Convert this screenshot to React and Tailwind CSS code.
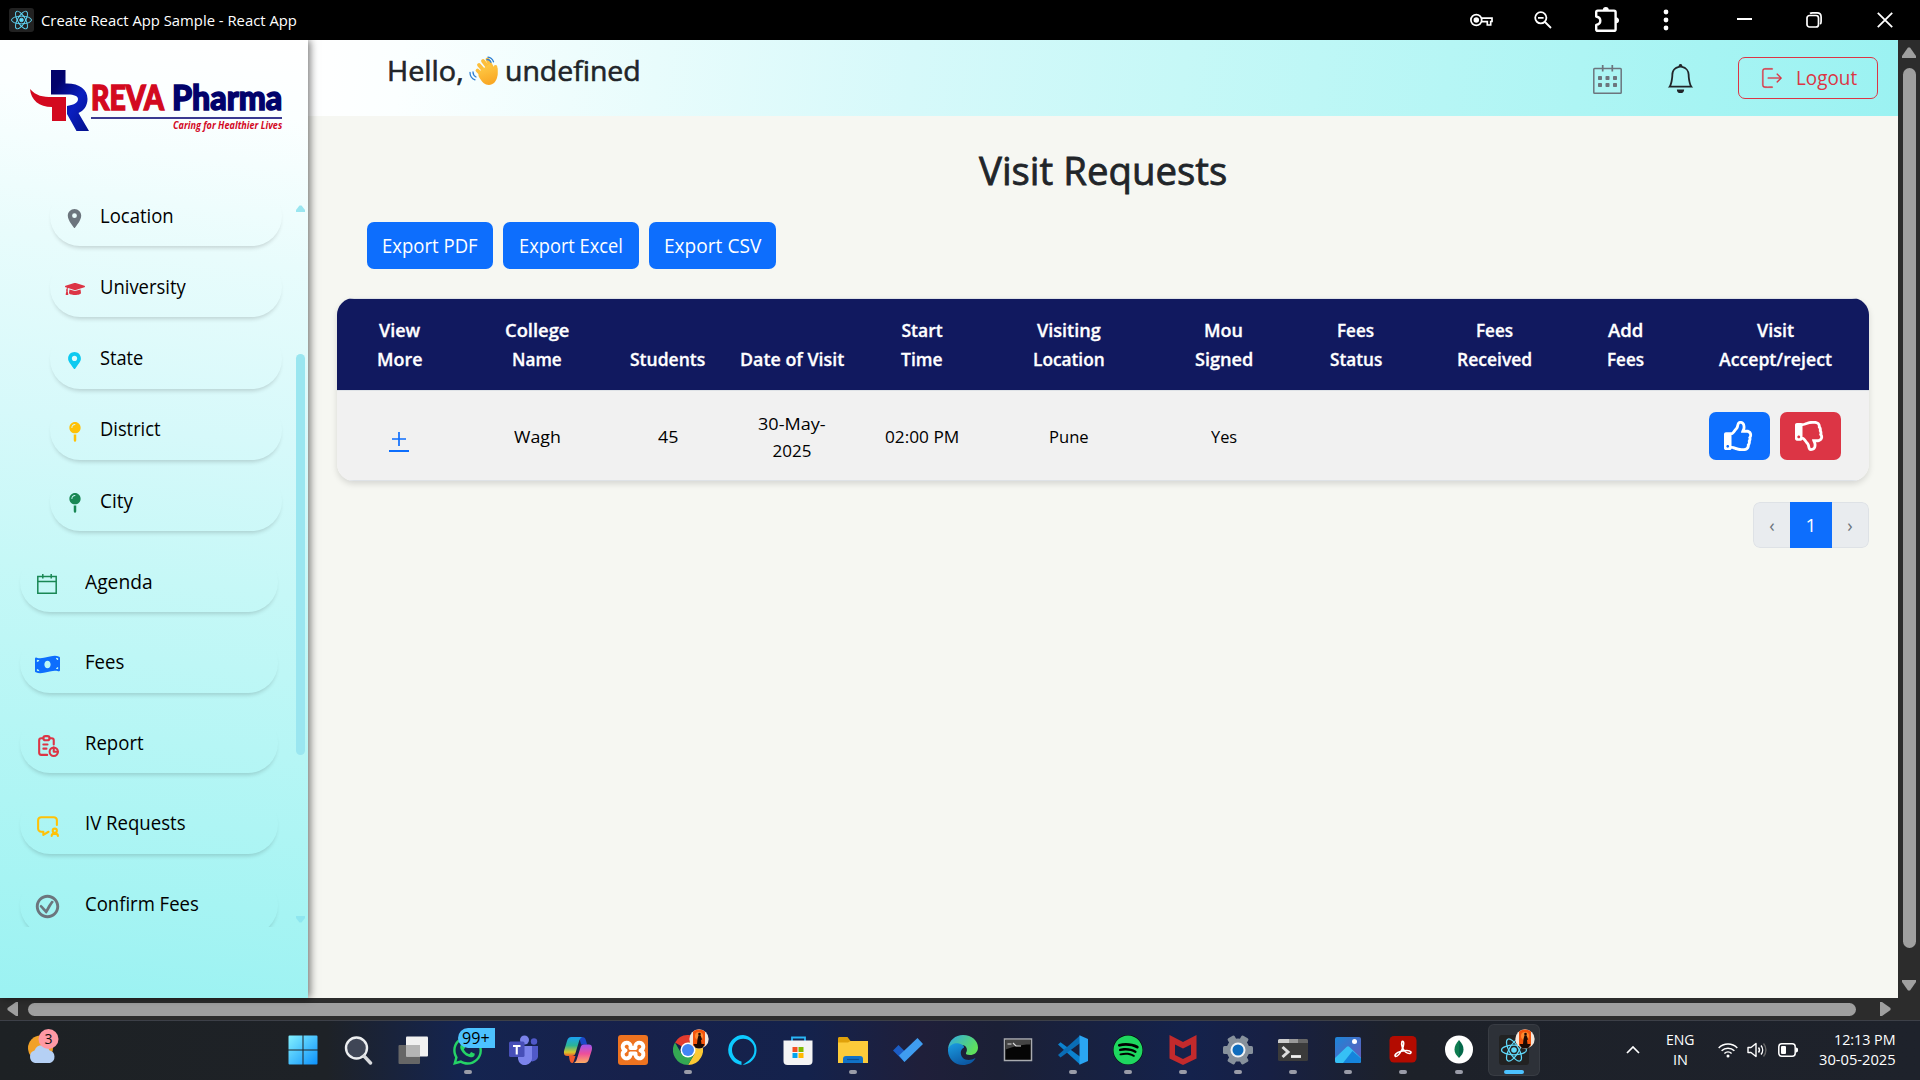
import React, { useLayoutEffect, useRef, useState } from "react";
import { FaGraduationCap, FaMapPin, FaMoneyBillWave, FaRegThumbsUp, FaRegThumbsDown, FaSpotify, FaWhatsapp, FaMapMarkerAlt } from "react-icons/fa";
import { MdLocationOn } from "react-icons/md";
import { TbReport, TbMessageUser } from "react-icons/tb";
import { GiConfirmed } from "react-icons/gi";
import { CiLogout } from "react-icons/ci";
import { BsBell } from "react-icons/bs";

/* Single-line label condensed or stretched to an exact width. */
function Fit({ w, children, className = "" }) {
  const ref = useRef(null);
  const [scale, setScale] = useState(1);
  useLayoutEffect(() => {
    setScale(w / ref.current.offsetWidth);
  }, [w, children]);
  return (
    <span className={"inline-block whitespace-nowrap text-left " + className} style={{ width: w }}>
      <span ref={ref} className="inline-block origin-left" style={{ transform: `scaleX(${scale})` }}>
        {children}
      </span>
    </span>
  );
}

function ReactMark({ className = "" }) {
  return (
    <span className={"flex items-center justify-center rounded-[3px] bg-[#222] text-[#61dafb] " + className}>
      <svg viewBox="0 0 30 30" className="h-full w-full" fill="none" stroke="currentColor" strokeWidth="1.2">
        <ellipse cx="15" cy="15" rx="12.5" ry="4.8" />
        <ellipse cx="15" cy="15" rx="12.5" ry="4.8" transform="rotate(60 15 15)" />
        <ellipse cx="15" cy="15" rx="12.5" ry="4.8" transform="rotate(120 15 15)" />
        <circle cx="15" cy="15" r="2.2" fill="currentColor" />
      </svg>
    </span>
  );
}

function TitleBar() {
  return (
    <div className="flex h-10 shrink-0 items-center bg-black text-white">
      <ReactMark className="ml-[9px] h-6 w-[25px]" />
      <Fit w={256} className="ml-[7px] text-[15px]">Create React App Sample - React App</Fit>
      <div className="ml-auto flex items-center">
        <svg width="23" height="14" viewBox="0 0 23 14" fill="none" stroke="#fff" strokeWidth="1.7" className="mr-[41px]">
          <path d="M11.3 5.2H22v3.3h-1.3V12h-3.4V8.6h-1.5v0h-4.5" />
          <circle cx="6.3" cy="7" r="5.4" />
          <circle cx="6.3" cy="7" r="1.9" fill="#fff" />
        </svg>
        <svg width="18" height="18" viewBox="0 0 18 18" fill="none" stroke="#fff" strokeWidth="1.8" className="mr-[42px]">
          <circle cx="6.8" cy="6.8" r="5.6" />
          <path d="M11 11l6 6M4 6.8h5.6" />
        </svg>
        <svg width="26" height="26" viewBox="0 0 26 26" fill="none" stroke="#fff" strokeWidth="2.4" strokeLinejoin="round" className="mr-[43px]">
          <path d="M2.2 5.2c0-1 .5-1.6 1.5-1.6H20c1 0 1.6.6 1.6 1.6v17c0 1-.6 1.6-1.6 1.6H3.700c-1 0-1.500-.6-1.500-1.600v-4.300c5.500-1 5.500-7.400 0-8.400z" />
          <path d="M9.600 3a2.200 2.200 0 0 1 4.400 0M22 11a2.300 2.300 0 0 1 0 4.600" fill="#fff" strokeWidth="1.500" />
        </svg>
        <svg width="6" height="22" viewBox="0 0 6 22" fill="#fff" className="mr-[68px]">
          <circle cx="3" cy="3" r="2.400" /><circle cx="3" cy="11" r="2.400" /><circle cx="3" cy="19" r="2.400" />
        </svg>
        <span className="mr-[54px] h-[2px] w-[15px] -translate-y-px bg-white" />
        <svg width="16" height="16" viewBox="0 0 16 16" fill="none" stroke="#fff" strokeWidth="1.700" className="mr-[55px]">
          <rect x="1" y="3.500" width="11.500" height="11.500" rx="2.500" />
          <path d="M4 1.500C4.600 1 5.500.9 6.500.9h4.500c2.600 0 4.100 1.500 4.100 4.100v4.500c0 1-.2 2-.9 2.600" />
        </svg>
        <svg width="16" height="16" viewBox="0 0 16 16" fill="none" stroke="#fff" strokeWidth="1.800" className="mr-[27px]">
          <path d="M.8.800l14.400 14.400M15.200.800L.8 15.200" />
        </svg>
      </div>
    </div>
  );
}

function Logo() {
  return (
    <div className="ml-[30px] mt-[30px] flex h-[62px] w-[254px]">
      <svg width="60" height="62" viewBox="0 0 60 62" className="shrink-0">
        <defs>
          <linearGradient id="stem" x1="0" y1="0" x2="1" y2="1">
            <stop offset="0.200" stopColor="#02026b" /><stop offset="0.600" stopColor="#0a1fc0" /><stop offset="1" stopColor="#02108a" />
          </linearGradient>
        </defs>
        <path d="M21 0h14.500v13.500C49 13 57.500 19 57.500 29c0 7-4 12-9 14l10.500 18H46.500L37 44v-8c6-1 11-3 11-7 0-3-4-4.500-10-4.500H21z" fill="url(#stem)" />
        <path d="M0 19c6 7 13 8 22 8h14v24H22V37C9 37 1 30 0 19z" fill="#d3091f" />
      </svg>
      <div className="ml-[1px] flex w-[191px] flex-col">
        <div className="mt-[8px] flex h-[36px] items-center justify-between font-['Lato'] text-[35px] font-black leading-[36px]">
          <Fit w={73} className="text-[#d3091f] [-webkit-text-stroke:1.500px_#d3091f]">REVA</Fit>
          <Fit w={110} className="text-[#02026b] [-webkit-text-stroke:1.500px_#02026b]">Pharma</Fit>
        </div>
        <div className="mt-[3px] h-[2px] shrink-0 bg-[#3a3a90]" />
        <Fit w={109} className="ml-auto font-['Open_Sans'] text-[10.500px] font-bold italic leading-[13px] text-[#d3091f]">
          Caring for Healthier Lives
        </Fit>
      </div>
    </div>
  );
}

function AgendaIcon() {
  return (
    <svg width="20" height="20" viewBox="0 0 20 20" fill="none" stroke="#198754" strokeWidth="1.500">
      <path d="M.8 2.500h18.400v16.700H.8zM.8 7.500h18.400M5.800 0v4.500M14.200 0v4.500" />
    </svg>
  );
}

const subItems = [
  { label: "Location", w: 74, icon: <MdLocationOn size={23} color="#6c757d" /> },
  { label: "University", w: 86, icon: <FaGraduationCap size={20} color="#dc3545" /> },
  { label: "State", w: 43, icon: <FaMapMarkerAlt size={17} color="#0dcaf0" /> },
  { label: "District", w: 61, icon: <FaMapPin size={20} color="#ffc107" /> },
  { label: "City", w: 33, icon: <FaMapPin size={20} color="#198754" /> },
];

const mainItems = [
  { label: "Agenda", w: 68, icon: <AgendaIcon /> },
  { label: "Fees", w: 39, icon: <FaMoneyBillWave size={25} color="#0d6efd" /> },
  { label: "Report", w: 59, icon: <TbReport size={25} color="#dc3545" /> },
  { label: "IV Requests", w: 101, icon: <TbMessageUser size={25} color="#ffc107" /> },
  { label: "Confirm Fees", w: 114, icon: <GiConfirmed size={25} color="#6c757d" /> },
];

function Sidebar() {
  return (
    <aside className="z-10 flex h-[958px] w-[308px] shrink-0 flex-col bg-[linear-gradient(187deg,#ffffff_0%,#fbffff_8%,#e8fcfc_23%,#d6f9fa_41%,#c6f8f7_56%,#a6f4f3_88%,#9bf2f2_100%)] shadow-[2px_0_8px_rgba(0,0,0,0.55)]">
      <Logo />
      <div className="mt-[53px] flex h-[742px] overflow-hidden">
        <div className="h-full w-[290px] overflow-hidden text-black">
          <div className="ml-[50px] mt-px flex flex-col gap-[11.300px]">
            {subItems.map((it) => (
              <div key={it.label} className="flex h-[60px] w-[232px] shrink-0 items-center rounded-[30px] shadow-[0_4px_4px_-2px_rgba(0,0,0,0.160)]">
                <span className="ml-[10px] flex w-[29px] justify-center pt-[4px]">{it.icon}</span>
                <Fit w={it.w} className="-mt-px ml-[11px] text-[19.500px] leading-[30px]">{it.label}</Fit>
              </div>
            ))}
          </div>
          <div className="ml-5 mt-[21px] flex flex-col gap-[20.600px]">
            {mainItems.map((it) => (
              <div key={it.label} className="flex h-[60px] w-[258px] shrink-0 items-center rounded-[30px] shadow-[0_4px_4px_-2px_rgba(0,0,0,0.160)]">
                <span className="ml-[12px] flex w-[30px] justify-center pt-[4px]">{it.icon}</span>
                <Fit w={it.w} className="-mt-px ml-[23px] text-[19.500px] leading-[30px]">{it.label}</Fit>
              </div>
            ))}
          </div>
        </div>
        <div className="ml-[6px] flex w-[9px] flex-col items-center pt-5">
          <svg width="9" height="7" viewBox="0 0 9 7" fill="#9ae6f0" className="shrink-0"><path d="M3.500.5h2L9 5v2H0V5z" /></svg>
          <div className="mt-[142px] h-[401px] w-[9px] shrink-0 rounded-full bg-[#9ae6f0]" />
          <svg width="9" height="7" viewBox="0 0 9 7" fill="#8fe6ef" className="mt-[161px] shrink-0"><path d="M0 0h9v2L5.500 6.500h-2L0 2z" /></svg>
        </div>
      </div>
    </aside>
  );
}

function CalendarIcon() {
  return (
    <svg width="29" height="29" viewBox="0 0 29 29" fill="none" stroke="#6c757d" strokeWidth="1.500">
      <rect x=".8" y="3.500" width="27.400" height="24.700" rx=".8" />
      <path d="M9.700 0v6.500M19.300 0v6.500" strokeWidth="1.700" />
      <g fill="#6c757d" stroke="none">
        {[5, 12.500, 20].map((x) => [11, 18].map((y) => <rect key={x + "-" + y} x={x} y={y} width="4" height="4" rx=".7" />))}
      </g>
    </svg>
  );
}

function WaveEmoji() {
  return (
    <svg width="29" height="30" viewBox="0 0 29 30" className="ml-[5px] mt-[16px]">
      <defs>
        <linearGradient id="hand" x1="0" y1="0" x2="0.300" y2="1"><stop offset="0" stopColor="#ffcf4a" /><stop offset="1" stopColor="#f9a825" /></linearGradient>
      </defs>
      <g stroke="#fdbf3c" strokeLinecap="round" fill="none">
        <path d="M10 9l7 8M14 5l7 9M18.500 3.500l5 9M8.500 14.500l6 6" strokeWidth="3.800" />
        <path d="M26.500 11v8" strokeWidth="3.800" />
      </g>
      <path d="M9.500 16l11-8 4.500 6 3.500-2c.4 6 .3 11-3 14.500-3 3.400-8 3-11 .5-2-1.700-4-5-5-7z" fill="url(#hand)" />
      <g stroke="#2f7fd1" strokeWidth="1.300" fill="none" strokeLinecap="round">
        <path d="M19 1.200c2.500.3 4.500 2 5.500 4.600M18 3.500c1.500 0 3.200 1 4 2.800M1 16.500c0 3.500 1.500 6 5 7.300M4 16c0 2.500 1 4 3 5" />
      </g>
    </svg>
  );
}

function Header() {
  return (
    <header className="flex h-[76px] shrink-0 bg-[linear-gradient(97deg,#ffffff_0%,#fbffff_6%,#e8fcfc_22%,#d6f9fa_38%,#c6f8f7_55%,#a6f4f3_88%,#9bf2f2_100%)]">
      <div className="ml-[79px] flex text-[28px] leading-[60px] text-[#212529] [-webkit-text-stroke:0.600px_#212529]">
        <Fit w={77}>Hello,</Fit>
        <WaveEmoji />
        <Fit w={136} className="ml-[7px]">undefined</Fit>
      </div>
      <div className="ml-auto mr-5 flex h-full items-center">
        <div className="pt-[3px]"><CalendarIcon /></div>
        <BsBell size={29} color="#212529" className="ml-[44px] mt-[1px]" />
        <div className="ml-[43px] flex h-[42px] w-[140px] items-center rounded-[7px] border border-[#dc3545] text-[#dc3545]">
          <CiLogout size={26} className="ml-[20px] -scale-x-100" strokeWidth=".3" />
          <Fit w={61} className="ml-[11px] text-[19.500px]">Logout</Fit>
        </div>
      </div>
    </header>
  );
}

const columns = [
  { w: 124, lines: [["View", 41], ["More", 45]] },
  { w: 152, lines: [["College", 64], ["Name", 50]] },
  { w: 109, lines: [["Students", 75]] },
  { w: 140, lines: [["Date of Visit", 104]] },
  { w: 120, lines: [["Start", 41], ["Time", 42]] },
  { w: 174, lines: [["Visiting", 64], ["Location", 72]] },
  { w: 135, lines: [["Mou", 39], ["Signed", 58]] },
  { w: 129, lines: [["Fees", 37], ["Status", 52]] },
  { w: 149, lines: [["Fees", 37], ["Received", 75]] },
  { w: 113, lines: [["Add", 35], ["Fees", 37]] },
  { w: 187, lines: [["Visit", 37], ["Accept/reject", 113]] },
];

const row = [null, [["Wagh", 47]], [["45", 20]], [["30-May-", 68], ["2025", 39]], [["02:00 PM", 74]], [["Pune", 40]], [["Yes", 26]], [], [], [], null];

function VisitTable() {
  return (
    <div className="mt-[29px] ml-[29px] flex h-[183px] w-[1532px] flex-col overflow-hidden rounded-[17px] shadow-[0_3px_6px_rgba(0,0,0,0.130)]">
      <div className="flex h-[92px] shrink-0 border-t border-[#dee2e6] bg-[#11195f] pt-[17px] pb-[16px] text-white">
        {columns.map((c, i) => (
          <div key={i} className="flex shrink-0 flex-col items-center justify-end text-[17.500px] font-semibold leading-[29px] [-webkit-text-stroke:0.300px_#fff]" style={{ width: c.w }}>
            {c.lines.map(([t, w]) => <Fit key={t} w={w}>{t}</Fit>)}
          </div>
        ))}
      </div>
      <div className="flex h-[91px] shrink-0 items-center border-y border-[#dee2e6] bg-[#f1f1f1] text-black">
        {row.map((cell, i) => (
          <div key={i} className="flex shrink-0 flex-col items-center text-[17px] leading-[27px]" style={{ width: columns[i].w }}>
            {i === 0 && (
              <a className="mt-[12px] flex w-[20px] flex-col items-center gap-[4px]">
                <svg width="14" height="14" viewBox="0 0 14 14" stroke="#0d6efd" strokeWidth="1.700"><path d="M7 0v14M0 7h14" /></svg>
                <span className="h-[2px] w-[20px] bg-[#0d6efd]" />
              </a>
            )}
            {cell && cell.length > 0 && (
              <div className="flex flex-col items-center pt-[2px]">
                {cell.map(([t, w]) => <Fit key={t} w={w}>{t}</Fit>)}
              </div>
            )}
            {i === 10 && (
              <div className="mr-[2px] flex gap-[10px] text-white">
                <span className="flex h-12 w-[61px] items-center justify-center rounded-[7px] bg-[#0d6efd]"><FaRegThumbsUp size={30} /></span>
                <span className="flex h-12 w-[61px] items-center justify-center rounded-[7px] bg-[#dc3545]"><FaRegThumbsDown size={30} /></span>
              </div>
            )}
          </div>
        ))}
      </div>
    </div>
  );
}

function Main() {
  return (
    <main className="flex flex-1 flex-col bg-[#f6f7f2]">
      <Header />
      <h1 className="mt-[24px] flex h-[60px] items-center justify-center text-[39px] leading-[60px] text-[#212529] [-webkit-text-stroke:0.800px_#212529]">
        <Fit w={248} className="-ml-px">Visit Requests</Fit>
      </h1>
      <div className="ml-[59px] mt-[22px] flex gap-[10px] text-[19.500px] text-white">
        {[["Export PDF", 126, 96], ["Export Excel", 136, 104], ["Export CSV", 127, 97]].map(([t, w, tw]) => (
          <button key={t} className="flex h-[47px] items-center justify-center rounded-[7px] bg-[#0d6efd]" style={{ width: w }}>
            <Fit w={tw}>{t}</Fit>
          </button>
        ))}
      </div>
      <VisitTable />
      <div className="ml-auto mr-[29px] mt-[21px] flex h-[46px] w-[116px] overflow-hidden rounded-[7px]">
        <span className="flex w-[37px] items-center justify-center rounded-l-[7px] border border-r-0 border-[#dee2e6] bg-[#e9ecef] text-[18px] text-[#6c757d]">‹</span>
        <span className="flex w-[42px] items-center justify-center bg-[#0d6efd] text-[19px] text-white">1</span>
        <span className="flex w-[37px] items-center justify-center rounded-r-[7px] border border-l-0 border-[#dee2e6] bg-[#e9ecef] text-[18px] text-[#6c757d]">›</span>
      </div>
    </main>
  );
}

function Avatar() {
  return (
    <svg width="20" height="20" viewBox="0 0 20 20" className="absolute -right-[6px] -top-[6px]">
      <circle cx="10" cy="10" r="9.700" fill="#f2e6dc" />
      <path d="M4 2.500a9.700 9.700 0 0 1 12 0v14a9.700 9.700 0 0 1-12 0z" fill="#f4540c" />
      <circle cx="10" cy="7" r="4" fill="#ff8a30" />
      <circle cx="10.500" cy="5" r="1.300" fill="#1c0a05" />
      <path d="M9.500 6.300h2l1.500 4-1 1 .5 3.700h3l-1.500 3.500a9.700 9.700 0 0 1-8 0L4.500 15H8l.5-5z" fill="#1c0a05" />
    </svg>
  );
}

const S = ({ children }) => <svg width="30" height="30" viewBox="0 0 30 30">{children}</svg>;

const apps = [
  { id: "start", art: (
    <S>
      <defs><linearGradient id="win" x1="0" y1="0" x2="30" y2="30" gradientUnits="userSpaceOnUse"><stop stopColor="#86f3ff" /><stop offset="1" stopColor="#0a8ffb" /></linearGradient></defs>
      <path d="M.5 1.500a1 1 0 0 1 1-1h13v14H.5zM15.500.500h13a1 1 0 0 1 1 1v13h-14zM.5 15.500h14v14h-13a1 1 0 0 1-1-1zM15.500 15.500h14v13a1 1 0 0 1-1 1h-13z" fill="url(#win)" />
    </S>) },
  { id: "search", art: (
    <S><circle cx="13.500" cy="13" r="10.500" fill="#3f4656" stroke="#eceef0" strokeWidth="2.400" /><path d="M21 21l6.500 7" stroke="#d8dadd" strokeWidth="3.400" strokeLinecap="round" /></S>) },
  { id: "taskview", art: (
    <S><rect x=".5" y="10" width="21.500" height="19" rx="1" fill="#666" /><rect x="8" y="1.500" width="22" height="20" rx="1" fill="#f1f1f1" /><path d="M8 10h14v11.500H8z" fill="#b5b5b5" /></S>) },
  { id: "whatsapp", dot: true, art: (
    <span className="relative flex h-[30px] w-[30px] items-center justify-center">
      <FaWhatsapp size={33} color="#25d366" className="shrink-0" />
      <span className="absolute -top-[7px] left-[5px] flex h-5 w-[37px] items-center justify-center rounded-l-full rounded-r-[4px] bg-[#4cc2ff] text-[15.500px] leading-5 text-black"><Fit w={28}>99+</Fit></span>
    </span>) },
  { id: "teams", art: (
    <S>
      <circle cx="26" cy="6.500" r="3.200" fill="#5059c9" /><path d="M20 11h10v9a5.500 5.500 0 0 1-9 5z" fill="#5059c9" />
      <circle cx="16.500" cy="5" r="4.500" fill="#7b83eb" /><path d="M10 11h14v11a7 7 0 0 1-14 2z" fill="#7b83eb" />
      <rect x="1" y="6.500" width="15.500" height="15.500" rx="1.500" fill="#474fb8" />
      <path d="M5 10h7.500v2H9.800v7.500H7.700V12H5z" fill="#fff" />
    </S>) },
  { id: "copilot", art: (
    <S>
      <defs>
        <linearGradient id="cpa" x1="0" y1="0" x2="0" y2="1"><stop stopColor="#1ba1f2" /><stop offset=".45" stopColor="#2bb596" /><stop offset=".8" stopColor="#d8c82a" /><stop offset="1" stopColor="#ee5a2b" /></linearGradient>
        <linearGradient id="cpb" x1="0" y1="0" x2="0" y2="1"><stop stopColor="#9c55f0" /><stop offset=".5" stopColor="#ee4f9a" /><stop offset="1" stopColor="#fbae63" /></linearGradient>
      </defs>
      <path d="M16 2h3c2.200 0 3.200 1 3.800 3l1.300 4.500h-6z" fill="#1b49c8" />
      <path d="M8.500 2H19c-2 1-2.600 3-3.200 5l-3.300 11c-.6 2-1.500 3-3.500 3H4c-3 0-3.500-3-2.700-6L4 6C4.800 3.500 6 2 8.500 2z" fill="url(#cpa)" />
      <path d="M21.500 28H11c2-1 2.600-3 3.200-5l3.300-10.500c.6-2 1.500-3 3.500-3h5c3 0 3.500 3 2.700 6L26 24c-.8 2.500-2 4-4.500 4z" fill="url(#cpb)" />
      <path d="M6 21h6.500l-1.800 5.500c-.4 1.200-1 1.500-1.700 1.500-2 0-2.500-3-3-7z" fill="#f0582c" />
    </S>) },
  { id: "xampp", art: (
    <S>
      <rect width="30" height="30" rx="3" fill="#ee7320" />
      <g fill="none" stroke="#fff" strokeWidth="4"><path d="M12.500 13a4 4 0 1 0-5 2.500 4 4 0 1 0 5 3h5a4 4 0 1 0 5-3 4 4 0 1 0-5-2.500z" strokeLinejoin="round" /></g>
    </S>) },
  { id: "chrome", dot: true, badge: true, art: (
    <S>
      <path d="M15 15L2 7.500A15 15 0 0 1 28 7.500H15z" fill="#e33b2e" /><path d="M28 7.500A15 15 0 0 1 15 30l6.500-11.300L15 7.500z" fill="#fcc934" /><path d="M2 7.500A15 15 0 0 0 15 30l6.500-11.300-13 0z" fill="#34a853" />
      <circle cx="15" cy="15" r="7.500" fill="#fff" /><circle cx="15" cy="15" r="6" fill="#4285f4" />
    </S>) },
  { id: "alexa", art: (
    <S><path d="M15 0a15 15 0 0 0-1.500 29.900v-3.300C9 25 4 21.500 4 15a11.200 11.200 0 0 1 22.400 0c0 7.500-6 11-11.900 14.900A15 15 0 0 0 15 0z" fill="#0dcaff" /></S>) },
  { id: "store", art: (
    <S>
      <path d="M9 6V2.500h13V6" fill="none" stroke="#29b6f6" strokeWidth="1.800" /><path d="M.5 5.500h29V26a4 4 0 0 1-4 4h-21a4 4 0 0 1-4-4z" fill="#f4f4f4" />
      <path d="M9.500 12h5v5h-5z" fill="#f25022" /><path d="M15.500 12h5v5h-5z" fill="#7fba00" /><path d="M9.500 18h5v5h-5z" fill="#00a4ef" /><path d="M15.500 18h5v5h-5z" fill="#ffb900" />
    </S>) },
  { id: "explorer", dot: true, art: (
    <S>
      <path d="M0 3.500c0-.8.500-1.500 1.500-1.500h8l3 4H30v6H0z" fill="#e0a10a" /><path d="M0 7.500h10l2.500-1.500H30v22H0z" fill="#fccb3a" />
      <path d="M5 28v-4a3 3 0 0 1 3-3h14a3 3 0 0 1 3 3v4z" fill="#1172c8" /><path d="M9 24.500h12" stroke="#0b4f93" strokeWidth="1.200" />
    </S>) },
  { id: "todo", art: (
    <S><path d="M0 15.500l5.500-5.500 8 8-2 9z" fill="#1b5cc4" /><path d="M6 20.500L24.500 3l5.500 6-18.500 18z" fill="#3f9df0" /></S>) },
  { id: "edge", art: (
    <S>
      <defs>
        <linearGradient id="ea" x1="0" y1="0" x2="1" y2="0.500"><stop stopColor="#2fa8e8" /><stop offset="1" stopColor="#5fe05c" /></linearGradient>
        <linearGradient id="eb" x1="0" y1="0" x2="0.500" y2="1"><stop stopColor="#1b9de2" /><stop offset="1" stopColor="#0c59a4" /></linearGradient>
      </defs>
      <path d="M0 14C1 5 7.500 0 15 0c9 0 15 6 15 12.500 0 5-4 7.500-8 7.500-3 0-4.500-1-4-2 2-3 1-8-4.500-8C7 10 2 12 0 14z" fill="url(#ea)" />
      <path d="M0 14c2-4.500 7-6.500 11-5.500 4 .8 5.500 3 5 4-4 2-4 7-1.500 10 3 3.500 9 3 13 .5C25 28 20 30 15 30 6 30-.5 23 0 14z" fill="url(#eb)" />
    </S>) },
  { id: "cmd", art: (
    <S><rect x="1.500" y="4" width="27" height="21.500" fill="#050505" stroke="#a9abb0" strokeWidth="1.500" /><path d="M2.500 5h25v4.500c-10 0-18 2-25 5z" fill="#444" /><path d="M4.500 9h4M10 8l3 3h5" stroke="#ddd" strokeWidth="1.200" fill="none" /></S>) },
  { id: "vscode", dot: true, art: (
    <S>
      <path d="M2.500 7.200L0 9.500l22 20 .5-7.500z" fill="#0b82cf" /><path d="M22 .5L0 20l2.500 2.500L23 7.500z" fill="#0a6db5" /><path d="M21.500.2L30 4v22l-8.500 3.800z" fill="#2aa5f3" />
    </S>) },
  { id: "spotify", dot: true, art: (
    <span className="flex rounded-full bg-black"><FaSpotify size={30} color="#1ed760" /></span>) },
  { id: "mcafee", dot: true, art: (
    <S><path d="M1.500 0L15 7l13.500-7v23.500L15 30 1.500 23.500zM7 9.500v10.500l8 4 8-4V9.500l-8 4z" fill="#c22a2c" fillRule="evenodd" /></S>) },
  { id: "settings", dot: true, art: (
    <S>
      <g fill="#87919c">
        <circle cx="15" cy="15" r="11.500" />
        {[0, 60, 120, 180, 240, 300].map((a) => <rect key={a} x="24" y="11" width="6" height="8" rx="1.500" transform={`rotate(${a} 15 15)`} />)}
      </g>
      <circle cx="15" cy="15" r="7.500" fill="#f0f2f4" /><circle cx="15" cy="15" r="5.500" fill="#0f6cbd" />
    </S>) },
  { id: "terminal", dot: true, art: (
    <S><rect y="4" width="30" height="22" rx="1.500" fill="#3b3b3b" /><path d="M0 8V5.500A1.500 1.500 0 0 1 1.500 4H11v4z" fill="#ccc" /><path d="M11 4h9v4h-9z" fill="#999" /><path d="M20 4h8.500A1.500 1.500 0 0 1 30 5.500V8H20z" fill="#666" /><path d="M4.500 12l5.500 5-5.500 5" fill="none" stroke="#ddd" strokeWidth="3" /><path d="M13 21.500h10" stroke="#eee" strokeWidth="2.800" /></S>) },
  { id: "photos", dot: true, art: (
    <S>
      <defs><linearGradient id="ph" x1="0" y1="0" x2="1" y2="1"><stop stopColor="#1c86d8" /><stop offset="1" stopColor="#6a58b8" /></linearGradient></defs>
      <rect x="2" y="2" width="26" height="26" rx="2" fill="url(#ph)" />
      <path d="M2 23L13.500 12c1-1 2-1 3 0L28 23v3a2 2 0 0 1-2 2H4a2 2 0 0 1-2-2z" fill="#36c0f5" /><path d="M10 28l9.500-12L28 23.500V26a2 2 0 0 1-2 2z" fill="#1584dc" /><circle cx="21.500" cy="6.500" r="2.500" fill="#fff" />
    </S>) },
  { id: "acrobat", dot: true, art: (
    <S><rect x="1.500" y="1" width="27" height="26.500" rx="4.500" fill="#b30b00" /><path d="M14 6.500c2.500-1 2 4 0 8s-4 7-6.500 7c-1.500-1.500 1-4 5-5s9-1.500 10.500.500c.5 2-3 2-5.500 0s-5-7-3.500-10.500z" fill="none" stroke="#fff" strokeWidth="1.600" /></S>) },
  { id: "mongo", dot: true, art: (
    <S><circle cx="15" cy="14.500" r="14" fill="#fff" /><path d="M15 5c3 3.500 4.500 6 4.500 9.500S17.500 20.500 15 23z" fill="#04684a" /><path d="M15 5c-3 3.500-4.500 6-4.500 9.500s2 6 4.500 8.500z" fill="#0e7c50" /></S>) },
  { id: "react", active: true, badge: true, art: <ReactMark className="h-[30px] w-[30px]" /> },
];

function Taskbar() {
  return (
    <div className="flex h-[60px] shrink-0 border-t-[1.500px] border-[#3d4048] bg-[linear-gradient(90deg,#1d2124_0%,#1e2227_17%,#142450_24%,#17214b_33%,#14224c_42%,#1f1f3a_48%,#1b2036_52%,#14224c_62%,#172044_66%,#1d2129_73%,#1e222b_100%)] text-white">
      <div className="flex w-[275px] items-center">
        <svg width="36" height="38" viewBox="0 0 36 38" className="-mt-[9px] ml-[26px]">
          <circle cx="14.500" cy="21" r="12.500" fill="#f1a127" />
          <path d="M9 36a6.500 6.500 0 0 1-.5-12.500 8 8 0 0 1 15 0A6.500 6.500 0 0 1 24 36z" fill="#b5d0f4" />
          <circle cx="22.500" cy="12" r="10" fill="#ff99a4" />
          <text x="22.500" y="17" textAnchor="middle" fontSize="14" fill="#111">3</text>
        </svg>
      </div>
      <div className="flex">
        {apps.map((a) => (
          <div key={a.id} className="flex h-full w-[55.060px] shrink-0 justify-center pt-[4px]">
            <div className={"flex h-[50px] w-[50px] flex-col items-center rounded-[5px] pt-[10px] " + (a.active ? "bg-[#2d3138] ring-1 ring-[#383c43]" : "")}>
              <div className="relative flex h-[30px] w-[30px] items-center justify-center">
                {a.art}
                {a.badge && <Avatar />}
              </div>
              {a.dot && <span className="mt-[5px] h-[4px] w-[8px] rounded-full bg-[#9a9ca8]" />}
              {a.active && <span className="mt-[5px] h-[4px] w-[20px] rounded-full bg-[#4cc2ff]" />}
            </div>
          </div>
        ))}
      </div>
      <div className="ml-auto flex items-center pb-px pr-6 text-[14.500px] leading-5">
        <svg width="14" height="8" viewBox="0 0 14 8" fill="none" stroke="#fff" strokeWidth="1.700" className="mr-[26px]"><path d="M1 7l6-6 6 6" /></svg>
        <div className="mr-[23px] flex flex-col items-center">
          <Fit w={29}>ENG</Fit><Fit w={15}>IN</Fit>
        </div>
        <svg width="20" height="16" viewBox="0 0 20 16" fill="none" stroke="#fff" strokeWidth="1.500" className="mr-[9px]">
          <path d="M.7 6a13 13 0 0 1 18.600 0M3.600 8.800a9 9 0 0 1 12.800 0M6.400 11.500a5.200 5.200 0 0 1 7.200 0" /><circle cx="10" cy="14" r="1.500" fill="#fff" stroke="none" />
        </svg>
        <svg width="21" height="16" viewBox="0 0 21 16" fill="none" stroke="#fff" strokeWidth="1.400" className="mr-[10px]">
          <path d="M1 5.500h3L9 1.500v13l-5-4H1zM11.500 5.500a4 4 0 0 1 0 5M14 3.500a7 7 0 0 1 0 9" strokeLinejoin="round" /><path d="M16.500 1.500a10 10 0 0 1 0 13" stroke="#666" />
        </svg>
        <svg width="20" height="14" viewBox="0 0 20 14" className="mr-[21px]">
          <rect x=".8" y=".8" width="16.400" height="12.400" rx="3" fill="none" stroke="#fff" strokeWidth="1.500" /><rect x="3" y="3" width="5" height="8" rx="1" fill="#fff" /><path d="M18 4.500a2 2 0 0 1 2 2.500 2 2 0 0 1-2 2.500z" fill="#fff" />
        </svg>
        <div className="flex flex-col items-end">
          <Fit w={62}>12:13 PM</Fit><Fit w={77}>30-05-2025</Fit>
        </div>
      </div>
    </div>
  );
}

export default function App() {
  return (
    <div className="flex h-[1080px] w-[1920px] flex-col overflow-hidden font-['Open_Sans','Noto_Sans',sans-serif]">
      <TitleBar />
      <div className="flex h-[958px] shrink-0">
        <Sidebar />
        <Main />
        <div className="flex w-[22px] shrink-0 flex-col items-center bg-[#2c2c2c] pt-[7px]">
          <svg width="14" height="11" viewBox="0 0 14 11" fill="#9f9f9f"><path d="M6 .5h2l6 8.500v2H0V9z" /></svg>
          <div className="mt-[10px] h-[880px] w-[13px] rounded-full bg-[#9f9f9f]" />
          <svg width="14" height="11" viewBox="0 0 14 11" fill="#9f9f9f" className="mt-[32px]"><path d="M0 0h14v2L8 10.500H6L0 2z" /></svg>
        </div>
      </div>
      <div className="flex h-[22px] shrink-0 items-center bg-[#2c2c2c]">
        <svg width="11" height="14" viewBox="0 0 11 14" fill="#9f9f9f" className="ml-[7px]"><path d="M.5 6v2L9 14h2V0H9z" /></svg>
        <div className="ml-[10px] h-[13px] w-[1828px] rounded-full bg-[#9f9f9f]" />
        <svg width="11" height="14" viewBox="0 0 11 14" fill="#9f9f9f" className="ml-[24px]"><path d="M10.500 6v2L2 14H0V0h2z" /></svg>
      </div>
      <Taskbar />
    </div>
  );
}
